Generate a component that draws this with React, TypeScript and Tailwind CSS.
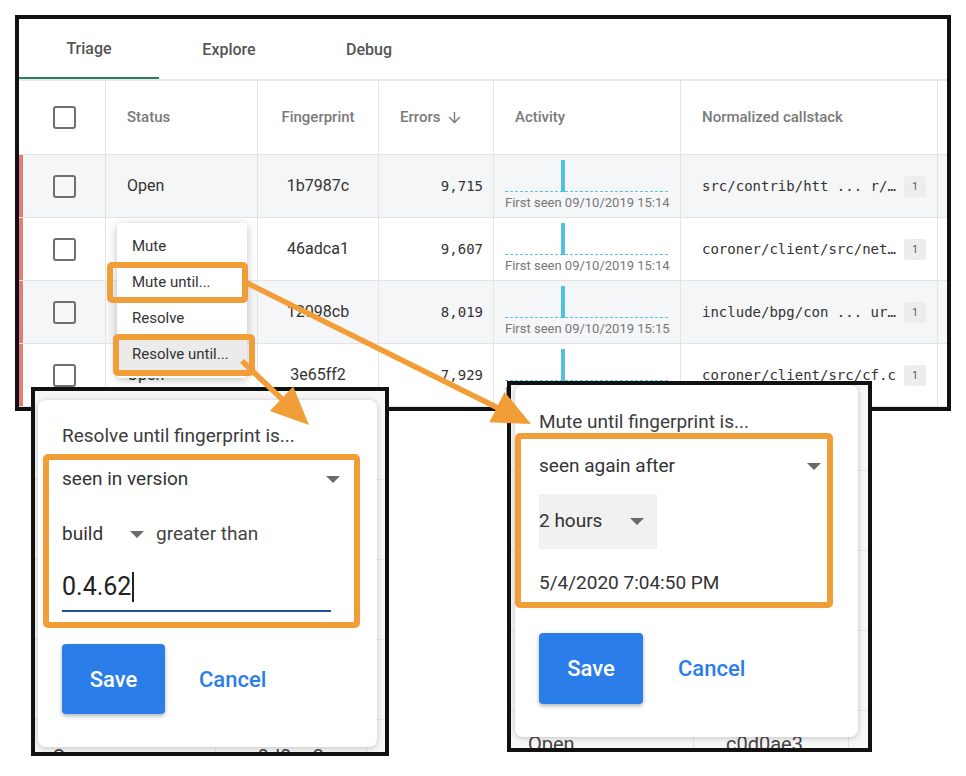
import React from "react";
import { ArrowDown } from "lucide-react";

const ORANGE = "#F29E38";

const rows = [
  { bg: "bg-[#f5f6f7]", fp: "1b7987c", err: "9,715", seen: "First seen 09/10/2019 15:14", cs: "src/contrib/htt ... r/…" },
  { bg: "bg-white", fp: "46adca1", err: "9,607", seen: "First seen 09/10/2019 15:14", cs: "coroner/client/src/net…" },
  { bg: "bg-[#f5f6f7]", fp: "12098cb", err: "8,019", seen: "First seen 09/10/2019 15:15", cs: "include/bpg/con ... ur…" },
  { bg: "bg-white", fp: "3e65ff2", err: "7,929", seen: "First seen 09/10/2019 15:15", cs: "coroner/client/src/cf.c" },
];

function Checkbox() {
  return <div className="w-[23px] h-[23px] rounded-[3px] border-2 border-[#6f6f6f] shrink-0" />;
}

function Tri() {
  return (
    <div className="w-0 h-0 border-l-[7px] border-r-[7px] border-t-[7px] border-l-transparent border-r-transparent border-t-[#6a6a6a] shrink-0" />
  );
}

function MainFrame() {
  return (
    <div className="absolute left-[15px] top-[15px] w-[936px] h-[396px] border-4 border-[#111] bg-white overflow-hidden">
      <div className="relative h-full font-[Roboto,sans-serif]">
        {/* tabs */}
        <div className="flex h-[60px]">
          <div className="w-[140px] flex items-center justify-center pt-[2px] text-[16px] font-medium text-[#555] border-b-2 border-[#2e7d5b]">Triage</div>
          <div className="w-[140px] flex items-center justify-center pt-[2px] text-[16px] font-medium text-[#555]">Explore</div>
          <div className="w-[140px] flex items-center justify-center pt-[2px] text-[16px] font-medium text-[#555]">Debug</div>
        </div>
        <div className="h-[2px] bg-[#e9e9e9]" />
        {/* header */}
        <div className="grid grid-cols-[87px_152px_121px_115px_187px_257px_9px] h-[74px] border-b border-[#e4e4e4] text-[15px] font-medium text-[#7a7a7a]">
          <div className="border-r border-[#e4e4e4] flex items-center pl-[34px]"><Checkbox /></div>
          <div className="border-r border-[#e4e4e4] flex items-center pl-[21px]">Status</div>
          <div className="border-r border-[#e4e4e4] flex items-center justify-center">Fingerprint</div>
          <div className="border-r border-[#e4e4e4] flex items-center pl-[21px] gap-[6px]">
            Errors <ArrowDown size={17} strokeWidth={2} color="#7a7a7a" />
          </div>
          <div className="border-r border-[#e4e4e4] flex items-center pl-[21px]">Activity</div>
          <div className="border-r border-[#e4e4e4] flex items-center pl-[21px]">Normalized callstack</div>
          <div />
        </div>
        {rows.map((r, i) => (
          <div key={i} className={`grid grid-cols-[87px_152px_121px_115px_187px_257px_9px] h-[63px] border-b border-[#e4e4e4] text-[#333] ${r.bg}`}>
            <div className="border-r border-[#e4e4e4] flex items-center">
              <div className="w-[4px] self-stretch bg-[#e57b7d]" />
              <div className="pl-[30px]"><Checkbox /></div>
            </div>
            <div className="border-r border-[#e4e4e4] flex items-center pl-[21px] text-[16px]">Open</div>
            <div className="border-r border-[#e4e4e4] flex items-center justify-center text-[16px]">{r.fp}</div>
            <div className="border-r border-[#e4e4e4] flex items-center justify-end pr-[10px] text-[14px] font-['DejaVu_Sans_Mono',monospace]">{r.err}</div>
            <div className="border-r border-[#e4e4e4] pl-[11px] pt-[5px]">
              <svg width="163" height="32" className="block">
                <line x1="0" y1="31.5" x2="163" y2="31.5" stroke="#5cc3de" strokeWidth="1" strokeDasharray="3 2" />
                <rect x="56" y="0" width="4" height="32" fill="#4fc3dc" />
              </svg>
              <div className="mt-[3px] text-[13px] leading-[16px] text-[#777] whitespace-nowrap">{r.seen}</div>
            </div>
            <div className="border-r border-[#e4e4e4] flex items-center pl-[21px] pr-[11px]">
              <span className="text-[14px] font-['DejaVu_Sans_Mono',monospace] whitespace-nowrap text-[#333]">{r.cs}</span>
              <div className="ml-auto w-[22px] h-[21px] rounded-[2px] bg-[#ededed] flex items-center justify-center text-[10px] text-[#555]">1</div>
            </div>
            <div />
          </div>
        ))}
        {/* menu */}
        <div className="absolute left-[98px] top-[204px] w-[130px] h-[155px] bg-white rounded-[4px] shadow-[0_2px_10px_rgba(0,0,0,0.25)] pt-[5px] text-[15px] text-[#333]">
          <div className="h-[36px] flex items-center pl-[15px]">Mute</div>
          <div className="h-[36px] flex items-center pl-[15px]">Mute until...</div>
          <div className="h-[36px] flex items-center pl-[15px]">Resolve</div>
          <div className="h-[36px] flex items-center pl-[15px] bg-[#ebebeb]">Resolve until...</div>
        </div>
      </div>
    </div>
  );
}

function LeftDialog() {
  return (
    <div className="absolute left-[31px] top-[387px] w-[358px] h-[369px] border-4 border-[#111] bg-[#f7f7f7] overflow-hidden font-[Roboto,sans-serif]">
      <div className="relative h-full">
        <div className="absolute inset-0">
          <div className="absolute left-0 right-0 top-[79px] h-px bg-[#e6e6e6]" />
          <div className="absolute left-0 right-0 top-[159px] h-px bg-[#e6e6e6]" />
          <div className="absolute left-0 right-0 top-[239px] h-px bg-[#e6e6e6]" />
          <div className="absolute left-0 right-0 top-[319px] h-px bg-[#e6e6e6]" />
          <div className="absolute top-0 bottom-0 left-[180px] w-px bg-[#e2e2e2]" />
          <div className="absolute top-0 bottom-0 left-[331px] w-px bg-[#e2e2e2]" />
          <div className="absolute left-[17px] top-[345px] text-[20px] leading-[24px] text-[#444]">Open</div>
          <div className="absolute left-[212px] top-[345px] text-[20px] leading-[24px] text-[#444]">c0d0ae3</div>
        </div>
        <div className="relative ml-[3px] mt-[9px] w-[339px] h-[347px] bg-white rounded-[8px] shadow-[0_1px_6px_rgba(0,0,0,0.22)] pl-[24px] pt-[24px] text-[#333]">
          <div className="text-[19px] leading-[24px] text-[#3c3c3c]">Resolve until fingerprint is...</div>
          <div className="mt-[11px] h-[40px] w-[278px] flex items-center justify-between text-[19px]">
            <span>seen in version</span>
            <Tri />
          </div>
          <div className="mt-[15px] h-[40px] flex items-center text-[19px]">
            <span className="w-[68px]">build</span>
            <Tri />
            <span className="ml-[12px] text-[#444]">greater than</span>
          </div>
          <div className="mt-[18px] w-[269px] h-[40px] border-b-2 border-[#1d4f9b] flex items-start">
            <span className="text-[25px] leading-[30px] text-[#222]">0.4.62</span>
            <span className="w-[1.5px] h-[30px] bg-[#222] ml-[1px]" />
          </div>
          <div className="mt-[32px] flex items-center">
            <div className="w-[103px] h-[70px] rounded-[4px] bg-[#2b7de9] shadow-[0_2px_4px_rgba(0,0,0,0.3)] flex items-center justify-center text-white text-[22px] font-medium">Save</div>
            <div className="ml-[34px] text-[22px] font-medium text-[#2b7de9]">Cancel</div>
          </div>
        </div>
      </div>
    </div>
  );
}

function RightDialog() {
  return (
    <div className="absolute left-[507px] top-[381px] w-[365px] h-[371px] border-4 border-[#111] bg-[#f7f7f7] overflow-hidden font-[Roboto,sans-serif]">
      <div className="relative h-full">
        <div className="absolute inset-0">
          <div className="absolute left-0 right-0 top-[85px] h-px bg-[#e6e6e6]" />
          <div className="absolute left-0 right-0 top-[165px] h-px bg-[#e6e6e6]" />
          <div className="absolute left-0 right-0 top-[245px] h-px bg-[#e6e6e6]" />
          <div className="absolute left-0 right-0 top-[325px] h-px bg-[#e6e6e6]" />
          <div className="absolute top-0 bottom-0 left-[182px] w-px bg-[#e2e2e2]" />
          <div className="absolute top-0 bottom-0 left-[337px] w-px bg-[#e2e2e2]" />
          <div className="absolute left-[17px] top-[347px] text-[20px] leading-[24px] text-[#444]">Open</div>
          <div className="absolute left-[215px] top-[347px] text-[20px] leading-[24px] text-[#444]">c0d0ae3</div>
        </div>
        <div className="relative ml-[4px] w-[343px] h-[352px] bg-white rounded-[8px] shadow-[0_1px_6px_rgba(0,0,0,0.22)] pl-[24px] pt-[25px] text-[#333]">
          <div className="text-[19px] leading-[24px] text-[#3c3c3c]">Mute until fingerprint is...</div>
          <div className="mt-[12px] h-[40px] w-[282px] flex items-center justify-between text-[19px]">
            <span>seen again after</span>
            <Tri />
          </div>
          <div className="mt-[8px] w-[118px] h-[55px] bg-[#f1f1f1] flex items-center text-[19px]">
            <span>2 hours</span>
            <div className="ml-auto mr-[13px]"><Tri /></div>
          </div>
          <div className="mt-[22px] text-[19px] leading-[24px]">5/4/2020 7:04:50 PM</div>
          <div className="mt-[38px] flex items-center">
            <div className="w-[104px] h-[71px] rounded-[4px] bg-[#2b7de9] shadow-[0_2px_4px_rgba(0,0,0,0.3)] flex items-center justify-center text-white text-[22px] font-medium">Save</div>
            <div className="ml-[35px] text-[22px] font-medium text-[#2b7de9]">Cancel</div>
          </div>
        </div>
      </div>
    </div>
  );
}

function Overlay() {
  return (
    <svg className="absolute left-0 top-0 pointer-events-none" width="966" height="776">
      <g fill="none" stroke={ORANGE} strokeWidth="6">
        <rect x="110" y="265" width="135" height="35" rx="2" />
        <rect x="116" y="337" width="136" height="36" rx="2" />
        <rect x="46" y="457" width="311" height="168" rx="2" />
        <rect x="518" y="436" width="312" height="169" rx="2" />
      </g>
      <line x1="247" y1="283" x2="500" y2="409" stroke={ORANGE} strokeWidth="5.5" />
      <polygon points="531,424 489.4,422.3 504.6,391.9" fill={ORANGE} />
      <line x1="242" y1="361" x2="285" y2="402" stroke={ORANGE} strokeWidth="5.5" />
      <polygon points="309,425 269.8,411 293.2,386.4" fill={ORANGE} />
    </svg>
  );
}

export default function App() {
  return (
    <div className="relative w-[966px] h-[776px] bg-white overflow-hidden">
      <MainFrame />
      <LeftDialog />
      <RightDialog />
      <Overlay />
    </div>
  );
}
